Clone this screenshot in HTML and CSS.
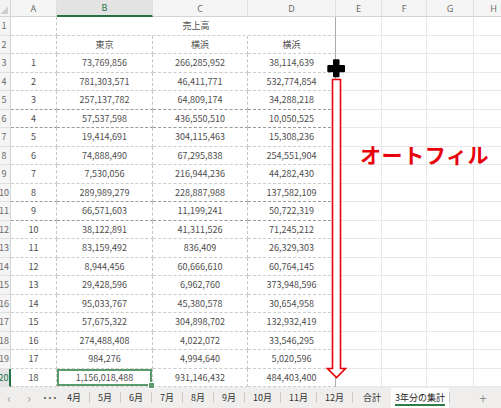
FILE: index.html
```html
<!DOCTYPE html>
<html lang="ja">
<head>
<meta charset="utf-8">
<title>3年分の集計</title>
<link rel="stylesheet" href="styles.css">
</head>
<body>
<div class="app">
  <div class="sheet">
    <div class="corner"></div>
    <div class="ch">A</div><div class="ch on">B</div><div class="ch">C</div><div class="ch">D</div><div class="ch">E</div><div class="ch">F</div><div class="ch">G</div><div class="ch">H</div>

    <div class="rh">1</div><div class="t"></div><div class="t m edge">売上高</div><div class="c"></div><div class="c"></div><div class="c"></div><div class="c"></div>
    <div class="rh">2</div><div class="t"></div><div class="t">東京</div><div class="t">横浜</div><div class="t edge">横浜</div><div class="c"></div><div class="c"></div><div class="c"></div><div class="c"></div>
    <div class="rh">3</div><div class="t">1</div><div class="t">73,769,856</div><div class="t">266,285,952</div><div class="t edge">38,114,639</div><div class="c"></div><div class="c"></div><div class="c"></div><div class="c"></div>
    <div class="rh">4</div><div class="t">2</div><div class="t">781,303,571</div><div class="t">46,411,771</div><div class="t edge">532,774,854</div><div class="c"></div><div class="c"></div><div class="c"></div><div class="c"></div>
    <div class="rh">5</div><div class="t dk">3</div><div class="t dk">257,137,782</div><div class="t dk">64,809,174</div><div class="t dk edge">34,288,218</div><div class="c"></div><div class="c"></div><div class="c"></div><div class="c"></div>
    <div class="rh">6</div><div class="t dk">4</div><div class="t dk">57,537,598</div><div class="t dk">436,550,510</div><div class="t dk edge">10,050,525</div><div class="c"></div><div class="c"></div><div class="c"></div><div class="c"></div>
    <div class="rh">7</div><div class="t">5</div><div class="t">19,414,691</div><div class="t">304,115,463</div><div class="t edge">15,308,236</div><div class="c"></div><div class="c"></div><div class="c"></div><div class="c"></div>
    <div class="rh">8</div><div class="t">6</div><div class="t">74,888,490</div><div class="t">67,295,838</div><div class="t edge">254,551,904</div><div class="c"></div><div class="c"></div><div class="c"></div><div class="c"></div>
    <div class="rh">9</div><div class="t">7</div><div class="t">7,530,056</div><div class="t">216,944,236</div><div class="t edge">44,282,430</div><div class="c"></div><div class="c"></div><div class="c"></div><div class="c"></div>
    <div class="rh">10</div><div class="t dk">8</div><div class="t dk">289,989,279</div><div class="t dk">228,887,988</div><div class="t dk edge">137,582,109</div><div class="c"></div><div class="c"></div><div class="c"></div><div class="c"></div>
    <div class="rh">11</div><div class="t dk">9</div><div class="t dk">66,571,603</div><div class="t dk">11,199,241</div><div class="t dk edge">50,722,319</div><div class="c"></div><div class="c"></div><div class="c"></div><div class="c"></div>
    <div class="rh">12</div><div class="t">10</div><div class="t">38,122,891</div><div class="t">41,311,526</div><div class="t edge">71,245,212</div><div class="c"></div><div class="c"></div><div class="c"></div><div class="c"></div>
    <div class="rh">13</div><div class="t">11</div><div class="t">83,159,492</div><div class="t">836,409</div><div class="t edge">26,329,303</div><div class="c"></div><div class="c"></div><div class="c"></div><div class="c"></div>
    <div class="rh">14</div><div class="t">12</div><div class="t">8,944,456</div><div class="t">60,666,610</div><div class="t edge">60,764,145</div><div class="c"></div><div class="c"></div><div class="c"></div><div class="c"></div>
    <div class="rh">15</div><div class="t">13</div><div class="t">29,428,596</div><div class="t">6,962,760</div><div class="t edge">373,948,596</div><div class="c"></div><div class="c"></div><div class="c"></div><div class="c"></div>
    <div class="rh">16</div><div class="t">14</div><div class="t">95,033,767</div><div class="t">45,380,578</div><div class="t edge">30,654,958</div><div class="c"></div><div class="c"></div><div class="c"></div><div class="c"></div>
    <div class="rh">17</div><div class="t">15</div><div class="t">57,675,322</div><div class="t">304,898,702</div><div class="t edge">132,932,419</div><div class="c"></div><div class="c"></div><div class="c"></div><div class="c"></div>
    <div class="rh">18</div><div class="t">16</div><div class="t">274,488,408</div><div class="t">4,022,072</div><div class="t edge">33,546,295</div><div class="c"></div><div class="c"></div><div class="c"></div><div class="c"></div>
    <div class="rh">19</div><div class="t">17</div><div class="t">984,276</div><div class="t">4,994,640</div><div class="t edge">5,020,596</div><div class="c"></div><div class="c"></div><div class="c"></div><div class="c"></div>
    <div class="rh on">20</div><div class="t">18</div><div class="t sel">1,156,018,488</div><div class="t">931,146,432</div><div class="t edge">484,403,400</div><div class="c"></div><div class="c"></div><div class="c"></div><div class="c"></div>
  </div>

  <div class="tabs">
    <div class="nav n1">&#x2039;</div>
    <div class="nav n2">&#x203A;</div>
    <div class="nav n3">&middot;&middot;&middot;</div>
    <div class="tab">4月</div><div class="sep"></div>
    <div class="tab">5月</div><div class="sep"></div>
    <div class="tab">6月</div><div class="sep"></div>
    <div class="tab">7月</div><div class="sep"></div>
    <div class="tab">8月</div><div class="sep"></div>
    <div class="tab">9月</div><div class="sep"></div>
    <div class="tab">10月</div><div class="sep"></div>
    <div class="tab">11月</div><div class="sep"></div>
    <div class="tab">12月</div><div class="sep"></div>
    <div class="tab wide">合計</div>
    <div class="tab active"><span>3年分の集計</span></div><div class="sep"></div>
    <div class="add">+</div>
  </div>

  <svg class="cursor" width="21" height="21" viewBox="0 0 21 21">
    <rect x="7" y="1.3" width="6.5" height="18" rx="1" fill="#000"/>
    <rect x="1.3" y="7" width="17.7" height="7.3" rx="1" fill="#000"/>
  </svg>
  <svg class="arrow" width="22" height="302" viewBox="0 0 22 302">
    <path d="M6.5 1.5 H14.5 V290.5 H19.5 L10.5 299.5 L1.5 290.5 H6.5 Z" fill="#fff" stroke="#e8000b" stroke-width="1.6" stroke-linejoin="miter"/>
  </svg>
  <div class="label">オートフィル</div>
</div>
</body>
</html>
```

FILE: styles.css
```css
* { box-sizing: border-box; }
html, body { margin: 0; padding: 0; }
body {
  width: 501px;
  height: 408px;
  overflow: hidden;
  background: #fff;
  font-family: "Noto Sans CJK JP", "Noto Sans", sans-serif;
}
.app {
  position: relative;
  width: 501px;
  height: 408px;
  overflow: hidden;
  display: flex;
  flex-direction: column;
}
.sheet {
  flex: none;
  display: grid;
  grid-template-columns: 13px 46px 96px 95px 88px 46px 45px 47px 40px;
  grid-template-rows: 17px repeat(20, 18.5px);
  margin-left: -2px;
  width: 516px;
}
.sheet > div {
  display: flex;
  align-items: center;
  justify-content: center;
  white-space: nowrap;
  font-size: 9px;
  color: #4e4e4e;
  line-height: 1;
}
.corner {
  background: #f3f3f3 linear-gradient(to top left, #cfcfcf 50%, transparent 50%) no-repeat right 2px bottom 2px / 8px 8px;
  border-right: 1px solid #d4d4d4;
  border-bottom: 1px solid #d4d4d4;
}
.ch {
  background: #f5f5f5;
  color: #6a6a6a !important;
  font-family: "Noto Sans", sans-serif;
  font-size: 9px !important;
  border-right: 1px solid #e0e0e0;
  border-bottom: 1px solid #d4d4d4;
}
.ch.on {
  background: #e3e3e3;
  color: #217346 !important;
  border-bottom: 2px solid #217346;
}
.rh {
  background: #f5f5f5;
  color: #6a6a6a !important;
  border-right: 1px solid #d4d4d4;
  border-bottom: 1px solid #e0e0e0;
}
.rh.on {
  background: #e3e3e3;
  color: #217346 !important;
  border-right: 2px solid #217346;
}
.c {
  border-right: 1px solid #e8e8e8;
  border-bottom: 1px solid #e8e8e8;
}
.t {
  border-right: 1px dashed #c4c4c4;
  border-bottom: 1px dashed #cdcdcd;
}
.t.dk { border-bottom-color: #9a9a9a; }
.t.edge { border-right: 1px solid #ababab; }
.t.m { grid-column: span 3; }
.t.sel {
  position: relative;
  box-shadow: inset 0 0 0 2px #5b9a6d;
}
.t.sel::after {
  content: "";
  position: absolute;
  right: -3px;
  bottom: -3px;
  width: 5px;
  height: 5px;
  background: #5b9a6d;
  border: 1px solid #fff;
}

.tabs {
  flex: 1;
  display: flex;
  align-items: stretch;
  background: #efeeec;
  font-size: 9px;
  color: #333;
  line-height: 1;
}
.nav {
  display: flex;
  align-items: center;
  justify-content: center;
  color: #9a9a9a;
  font-size: 12px;
}
.n1 { width: 18px; }
.n2 { width: 22px; }
.n3 { width: 19px; font-size: 10px; font-weight: 700; letter-spacing: -1px; color: #555; }
.tab {
  display: flex;
  align-items: center;
  padding: 0 8px;
}
.tab.wide { padding: 0 10px; }
.tab.active {
  background: #fff;
  padding: 0 4px 0 4px;
  margin-top: 1px;
  border-radius: 3px 3px 0 0;
  color: #222;
}
.tab.active span {
  padding-bottom: 2px;
  border-bottom: 2px solid #2e7d46;
  margin-top: 3px;
}
.sep {
  width: 1px;
  align-self: center;
  height: 11px;
  background: #cbcbcb;
}
.add {
  margin-left: auto;
  width: 36px;
  display: flex;
  align-items: center;
  justify-content: center;
  font-size: 14px;
  color: #7a7a7a;
  font-weight: 300;
}

.cursor { position: absolute; left: 326px; top: 58px; }
.arrow { position: absolute; left: 326px; top: 78px; }
.label {
  position: absolute;
  left: 360px;
  top: 144px;
  font-size: 21px;
  line-height: 21px;
  font-weight: 700;
  letter-spacing: 0.6px;
  color: #e8000b;
  white-space: nowrap;
}
```
